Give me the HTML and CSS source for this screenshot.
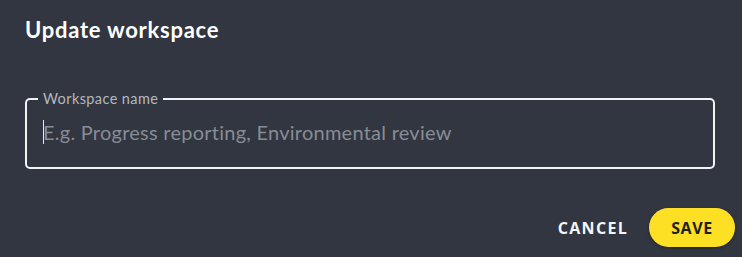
FILE: index.html
```html
<!DOCTYPE html>
<html>
<head>
<meta charset="utf-8">
<link rel="stylesheet" href="styles.css">
</head>
<body>
<div class="dialog">
  <h2 class="title">Update workspace</h2>
  <fieldset class="field">
    <legend class="label">Workspace name</legend>
    <div class="input"><span class="caret"></span><span class="placeholder">E.g. Progress reporting, Environmental review</span></div>
  </fieldset>
  <div class="actions">
    <button class="btn btn-text">CANCEL</button>
    <button class="btn btn-primary">SAVE</button>
  </div>
</div>
</body>
</html>
```
FILE: styles.css
```css
html, body {
  margin: 0;
  padding: 0;
  background: #313640;
  width: 742px;
  height: 257px;
  overflow: hidden;
}
.dialog {
  padding: 16px 7px 0 25px;
  font-family: "Lato", "Open Sans", sans-serif;
  color: #fff;
}
.title {
  margin: 0;
  font-size: 22px;
  font-weight: 700;
  line-height: 28px;
  letter-spacing: 0.75px;
}
.field {
  margin: 55px 0 0 0;
  width: 690px;
  box-sizing: border-box;
  border: 2px solid #f2f3f5;
  border-radius: 5px;
  padding: 0 16px;
  height: 78px;
  position: relative;
  top: -8px;
}
.label {
  padding: 0 5px;
  margin-left: -5px;
  font-size: 14.5px;
  line-height: 16px;
  color: #b4b8bf;
  letter-spacing: 0.4px;
}
.input {
  display: flex;
  align-items: center;
  height: 54px;
  margin-top: -2px;
}
.caret {
  width: 1px;
  height: 24px;
  background: #e6e8eb;
  margin-right: -1px;
}
.placeholder {
  font-size: 20px;
  color: #878c95;
  letter-spacing: 0.25px;
}
.actions {
  display: flex;
  justify-content: flex-end;
  align-items: center;
  gap: 21px;
  margin-top: 31px;
}
.btn {
  font-family: "Open Sans", sans-serif;
  font-weight: 700;
  font-size: 16px;
  letter-spacing: 0.6px;
  border: none;
  cursor: pointer;
}
.btn-text {
  background: transparent;
  color: #f4f5f7;
  padding: 0;
  letter-spacing: 1.3px;
}
.btn-primary {
  background: #fde024;
  color: #1f1f1f;
  width: 86px;
  height: 39px;
  border-radius: 20px;
  box-shadow: 0 1px 3px rgba(0,0,0,0.35);
}
```
